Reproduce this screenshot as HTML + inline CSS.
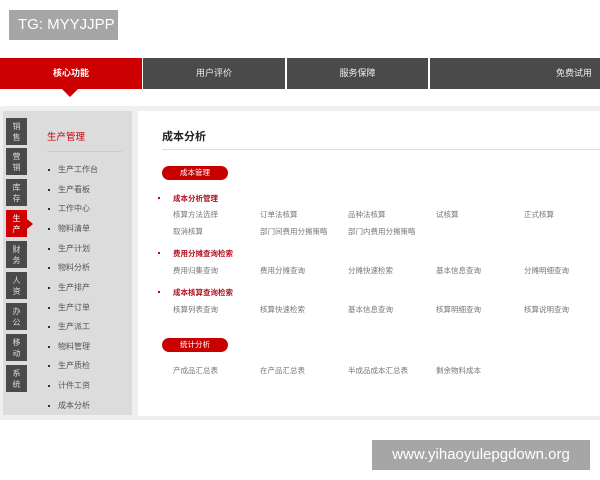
<!DOCTYPE html>
<html><head><meta charset="utf-8"><style>
*{margin:0;padding:0;box-sizing:border-box}
body{width:600px;height:480px;background:#fff;position:relative;overflow:hidden;font-family:"Liberation Sans","Noto Sans CJK SC",sans-serif}
.a{position:absolute}
.tab{position:absolute;top:58px;height:31px;background:#4a4a4a;color:#eee;font-size:9px;text-align:center;line-height:31px}
.sd{position:absolute;left:6px;width:21px;height:27px;background:#4a4a4a;color:#ddd;font-size:8px;line-height:11px;text-align:center;padding-top:3px}
.li{position:absolute;left:58px;font-size:8px;color:#555}
.li:before{content:"";position:absolute;left:-10px;top:5px;width:2px;height:2px;background:#333}
.t{position:absolute;font-size:7.5px;color:#777;white-space:nowrap}
.h{position:absolute;left:173px;font-size:7.5px;color:#b01020;font-weight:bold}
.h:before{content:"";position:absolute;left:-15px;top:4px;width:2px;height:2px;background:#c00}
.pill{position:absolute;left:162px;width:66px;height:14px;border-radius:7px;background:#c80000;color:#fff;font-size:7.5px;text-align:center;line-height:14px}
</style></head><body>
<div class="a" style="left:9px;top:10px;width:109px;height:30px;background:#a6a6a6;color:#fff;font-size:15px;line-height:30px;padding-left:9px">TG: MYYJJPP</div>
<div class="tab" style="left:0;width:142px;background:#cc0000;font-weight:bold;color:#fff">核心功能</div>
<div class="a" style="left:62px;top:89px;border-left:8px solid transparent;border-right:8px solid transparent;border-top:8px solid #cc0000"></div>
<div class="tab" style="left:143px;width:142px">用户评价</div>
<div class="tab" style="left:287px;width:141px">服务保障</div>
<div class="tab" style="left:430px;width:170px;text-align:right;padding-right:8px">免费试用</div>
<div class="a" style="left:0;top:106px;width:600px;height:314px;background:#efefef"></div>
<div class="a" style="left:3px;top:111px;width:129px;height:304px;background:#dcdcdc"></div>
<div class="a" style="left:138px;top:111px;width:462px;height:305px;background:#fff"></div>
<div class="sd" style="top:118px">销<br>售</div>
<div class="sd" style="top:148px">营<br>销</div>
<div class="sd" style="top:179px">库<br>存</div>
<div class="sd" style="top:210px;background:#d00000;color:#fff">生<br>产</div>
<div class="a" style="left:27px;top:219px;border-top:5px solid transparent;border-bottom:5px solid transparent;border-left:6px solid #d00000"></div>
<div class="sd" style="top:241px">财<br>务</div>
<div class="sd" style="top:272px">人<br>资</div>
<div class="sd" style="top:303px">办<br>公</div>
<div class="sd" style="top:334px">移<br>动</div>
<div class="sd" style="top:365px">系<br>统</div>
<div class="a" style="left:47px;top:129px;font-size:9.5px;color:#c00">生产管理</div>
<div class="a" style="left:47px;top:151px;width:75px;height:1px;background:#ccc"></div>
<div class="li" style="top:164px">生产工作台</div>
<div class="li" style="top:184px">生产看板</div>
<div class="li" style="top:203px">工作中心</div>
<div class="li" style="top:223px">物料清单</div>
<div class="li" style="top:243px">生产计划</div>
<div class="li" style="top:262px">物料分析</div>
<div class="li" style="top:282px">生产排产</div>
<div class="li" style="top:302px">生产订单</div>
<div class="li" style="top:321px">生产派工</div>
<div class="li" style="top:341px">物料管理</div>
<div class="li" style="top:360px">生产质检</div>
<div class="li" style="top:380px">计件工资</div>
<div class="li" style="top:400px">成本分析</div>
<div class="a" style="left:162px;top:128px;font-size:11px;font-weight:bold;color:#222">成本分析</div>
<div class="a" style="left:162px;top:149px;width:438px;height:1px;background:#ddd"></div>
<div class="pill" style="top:166px">成本管理</div>
<div class="h" style="top:193px">成本分析管理</div>
<div class="t" style="left:173px;top:209px">核算方法选择</div><div class="t" style="left:260px;top:209px">订单法核算</div><div class="t" style="left:348px;top:209px">品种法核算</div><div class="t" style="left:436px;top:209px">试核算</div><div class="t" style="left:524px;top:209px">正式核算</div>
<div class="t" style="left:173px;top:226px">取消核算</div><div class="t" style="left:260px;top:226px">部门间费用分摊策略</div><div class="t" style="left:348px;top:226px">部门内费用分摊策略</div>
<div class="h" style="top:248px">费用分摊查询检索</div>
<div class="t" style="left:173px;top:265px">费用归集查询</div><div class="t" style="left:260px;top:265px">费用分摊查询</div><div class="t" style="left:348px;top:265px">分摊快速检索</div><div class="t" style="left:436px;top:265px">基本信息查询</div><div class="t" style="left:524px;top:265px">分摊明细查询</div>
<div class="h" style="top:287px">成本核算查询检索</div>
<div class="t" style="left:173px;top:304px">核算列表查询</div><div class="t" style="left:260px;top:304px">核算快速检索</div><div class="t" style="left:348px;top:304px">基本信息查询</div><div class="t" style="left:436px;top:304px">核算明细查询</div><div class="t" style="left:524px;top:304px">核算说明查询</div>
<div class="pill" style="top:338px">统计分析</div>
<div class="t" style="left:173px;top:365px">产成品汇总表</div><div class="t" style="left:260px;top:365px">在产品汇总表</div><div class="t" style="left:348px;top:365px">半成品成本汇总表</div><div class="t" style="left:436px;top:365px">剩余物料成本</div>
<div class="a" style="left:372px;top:440px;width:218px;height:30px;background:#a6a6a6;color:#fff;font-size:15px;line-height:30px;text-align:center">www.yihaoyulepgdown.org</div>
</body></html>
